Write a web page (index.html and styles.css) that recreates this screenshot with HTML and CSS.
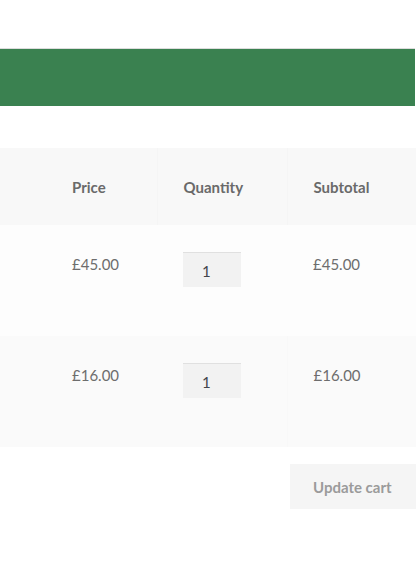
FILE: index.html
```html
<!DOCTYPE html>
<html lang="en">
<head>
<meta charset="utf-8">
<title>Cart</title>
<link rel="stylesheet" href="styles.css">
</head>
<body>
<div class="topspace"></div>
<header class="banner"></header>
<main class="content">
  <table class="cart">
    <colgroup>
      <col class="c-thumb">
      <col class="c-price">
      <col class="c-qty">
      <col class="c-sub">
    </colgroup>
    <thead>
      <tr>
        <th class="cell-thumb"></th>
        <th class="cell-price">Price</th>
        <th class="cell-qty">Quantity</th>
        <th class="cell-sub">Subtotal</th>
      </tr>
    </thead>
    <tbody>
      <tr class="odd">
        <td class="cell-thumb"></td>
        <td class="cell-price">£45.00</td>
        <td class="cell-qty"><span class="qty">1</span></td>
        <td class="cell-sub">£45.00</td>
      </tr>
      <tr class="even">
        <td class="cell-thumb"></td>
        <td class="cell-price">£16.00</td>
        <td class="cell-qty"><span class="qty">1</span></td>
        <td class="cell-sub">£16.00</td>
      </tr>
    </tbody>
  </table>
  <div class="actions">
    <button class="update" type="button">Update cart</button>
  </div>
</main>
</body>
</html>
```

FILE: styles.css
```css
html, body {
  margin: 0;
  padding: 0;
  background: #ffffff;
  overflow: hidden;
}
body {
  width: 416px;
  font-family: Lato, "Open Sans", sans-serif;
  font-size: 15px;
  color: #6d6d6d;
}
.topspace {
  height: 48px;
}
.banner {
  width: 415px;
  height: 57px;
  background: #3a8150;
  border-top: 1px solid #dcdcdc;
}
.content {
  padding-top: 42px;
}
.cart {
  border-collapse: collapse;
  table-layout: fixed;
  width: 416px;
}
.c-thumb { width: 46px; }
.c-price { width: 111px; }
.c-qty { width: 130px; }
.c-sub { width: 129px; }

.cart th,
.cart td {
  padding: 0 0 0 26px;
  text-align: left;
  vertical-align: top;
}
.cart th.cell-thumb,
.cart td.cell-thumb {
  padding-left: 0;
}
.cart thead th {
  height: 77px;
  vertical-align: middle;
  background: #f8f8f8;
  font-weight: 700;
  color: #6a6a6a;
}
.cart thead th.cell-qty,
.cart thead th.cell-sub {
  border-left: 1px solid #f5f5f5;
}
.cart tbody td {
  height: 111px;
  box-sizing: border-box;
  padding-top: 30px;
}
.cart tbody tr.odd td { background: #fdfdfd; }
.cart tbody tr.even td { background: #fafafa; }
.cart tbody tr.even td.cell-sub { border-left: 1px solid #f8f8f8; }

.cart tbody td.cell-qty {
  padding-top: 27px;
}
.qty {
  display: inline-block;
  box-sizing: border-box;
  width: 58px;
  height: 35px;
  padding: 8px 0 0 19px;
  background: #f2f2f2;
  border-top: 1px solid #e0e0e0;
  color: #43454b;
  font-size: 15px;
  line-height: 20px;
}
.actions {
  display: flex;
  justify-content: flex-end;
  padding-top: 17px;
}
.update {
  width: 126px;
  height: 45px;
  border: 0;
  background: #f5f5f5;
  color: #9b9b9b;
  font-family: Lato, "Open Sans", sans-serif;
  font-size: 15px;
  font-weight: 700;
  text-align: left;
  padding: 0 0 0 23px;
}
```
